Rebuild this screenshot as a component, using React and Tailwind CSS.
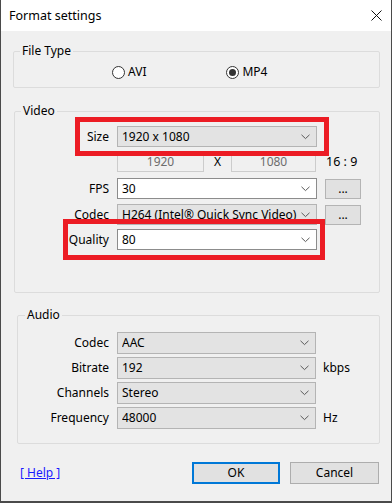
import React from 'react'

function Chevron() {
  return (
    <svg width="9" height="6" viewBox="0 0 9 6" className="shrink-0">
      <polyline points="0.5,0.8 4.5,4.6 8.5,0.8" fill="none" stroke="#5a5a5a" strokeWidth="1" />
    </svg>
  )
}

function Combo({ value, white, w = 'w-[200px]' }) {
  return (
    <div
      className={`${w} h-full flex items-center pl-[4px] pr-[6px] border ${
        white ? 'bg-white border-[#8c8c8c]' : 'bg-[#e3e3e3] border-[#b4b4b4]'
      }`}
    >
      <span className="flex-1 min-w-0 whitespace-nowrap overflow-hidden leading-[18px] pr-[3px]">{value}</span>
      <Chevron />
    </div>
  )
}

function DotsButton() {
  return (
    <div className="w-[36px] h-[20px] bg-[#e1e1e1] border border-[#b4b4b4] flex items-center justify-center leading-none">
      ...
    </div>
  )
}

function Radio({ label, checked }) {
  return (
    <div className="flex items-center gap-[3px]">
      <span className="w-[13px] h-[13px] rounded-full border border-[#333] bg-white flex items-center justify-center">
        {checked && <span className="w-[7px] h-[7px] rounded-full bg-[#333]" />}
      </span>
      <span>{label}</span>
    </div>
  )
}

export default function App() {
  return (
    <div className="relative w-[392px] h-[503px] flex flex-col bg-[#f0f0f0] border-x border-b-2 border-[#4a4a4a] text-[12px] leading-[14px] text-black font-['Noto_Sans',sans-serif]">
      {/* title bar */}
      <div className="h-[31px] shrink-0 bg-white flex items-center pl-[8px] pr-[9px]">
        <span className="text-[12.5px]">Format settings</span>
        <svg width="11" height="11" viewBox="0 0 11 11" className="ml-auto">
          <path d="M0.5 0.5 L10.5 10.5 M10.5 0.5 L0.5 10.5" stroke="#111" strokeWidth="1" />
        </svg>
      </div>

      {/* File type */}
      <fieldset className="mt-[13px] ml-[12px] w-[367px] h-[44px] border border-[#dcdcdc] rounded-[2px]">
        <legend className="ml-[6px] px-[2px] leading-[14px]">File Type</legend>
        <div className="mt-[7px] h-[14px] flex items-center ml-[98px] gap-[80px]">
          <Radio label="AVI" />
          <Radio label="MP4" checked />
        </div>
      </fieldset>

      {/* Video */}
      <fieldset className="mt-[16px] ml-[13px] w-[366px] h-[189px] border border-[#dcdcdc] rounded-[2px]">
        <legend className="ml-[6px] px-[2px] leading-[14px]">Video</legend>

        <div className="mt-[8px] h-[21px] flex items-center gap-[8px]">
          <span className="w-[94px] text-right">Size</span>
          <Combo value="1920 x 1080" />
        </div>

        <div className="mt-[5px] h-[20px] flex items-center">
          <span className="w-[102px]" />
          <div className="w-[87px] h-full border border-[#cccccc] flex items-center justify-center text-[#6d6d6d]">1920</div>
          <span className="w-[27px] text-center">X</span>
          <div className="w-[85px] h-full border border-[#cccccc] flex items-center justify-center text-[#6d6d6d]">1080</div>
          <span className="ml-[10px] text-[12.5px]">16 : 9</span>
        </div>

        <div className="mt-[6px] h-[21px] flex items-center gap-[8px]">
          <span className="w-[94px] text-right">FPS</span>
          <Combo value="30" white />
          <DotsButton />
        </div>

        <div className="mt-[5px] h-[21px] flex items-center gap-[8px]">
          <span className="w-[94px] text-right">Codec</span>
          <Combo value="H264 (Intel® Quick Sync Video)" />
          <DotsButton />
        </div>

        <div className="mt-[4px] h-[21px] flex items-center gap-[8px]">
          <span className="w-[94px] text-right">Quality</span>
          <Combo value="80" white />
        </div>
      </fieldset>

      {/* Audio */}
      <fieldset className="mt-[15px] ml-[16px] w-[363px] h-[136px] border border-[#dcdcdc] rounded-[2px]">
        <legend className="ml-[7px] px-[2px] leading-[14px]">Audio</legend>
        <div className="mt-[10px] flex flex-col gap-[3px]">
          {[
            { label: 'Codec', value: 'AAC' },
            { label: 'Bitrate', value: '192', unit: 'kbps' },
            { label: 'Channels', value: 'Stereo' },
            { label: 'Frequency', value: '48000', unit: 'Hz' },
          ].map((row) => (
            <div key={row.label} className="h-[22px] flex items-center gap-[8px]">
              <span className="w-[91px] text-right">{row.label}</span>
              <Combo value={row.value} w="w-[199px]" />
              {row.unit && <span className="-ml-[1px]">{row.unit}</span>}
            </div>
          ))}
        </div>
      </fieldset>

      {/* buttons */}
      <div className="mt-[18px] h-[22px] flex items-center pl-[19px] pr-[12px]">
        <a className="text-[#1a1aff] underline">[ Help ]</a>
        <div className="ml-auto flex gap-[10px] h-full">
          <div className="w-[88px] h-full bg-[#e1e1e1] border-2 border-[#0078d7] flex items-center justify-center">OK</div>
          <div className="w-[89px] h-full bg-[#e1e1e1] border border-[#adadad] flex items-center justify-center">Cancel</div>
        </div>
      </div>

      {/* red annotation boxes */}
      <div className="absolute left-[74px] top-[117px] w-[254px] h-[39px] border-[5px] border-[#ec1c24]" />
      <div className="absolute left-[62px] top-[219px] w-[262px] h-[41px] border-[5px] border-[#ec1c24]" />
    </div>
  )
}
